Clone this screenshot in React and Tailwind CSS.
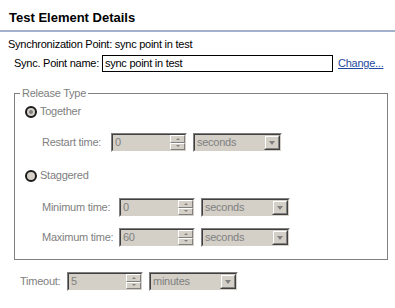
import React from "react";

const sunkenOuter = "border border-t-[#808080] border-l-[#808080] border-r-white border-b-white";
const sunkenInner = "border border-t-[#404040] border-l-[#404040] border-r-[#d4d0c8] border-b-[#d4d0c8]";
const raised = "border border-t-white border-l-white border-r-[#808080] border-b-[#808080]";

function Spinner({ value }) {
  return (
    <div className={`w-[76px] h-[19px] ${sunkenOuter}`}>
      <div className={`h-full flex bg-[#d4d0c8] ${sunkenInner}`}>
        <div className="flex-1 pl-[2px] leading-[15px] text-[#808080]">{value}</div>
        <div className="w-[15px] flex flex-col">
          <div className={`flex-1 flex items-center justify-center bg-[#d4d0c8] ${raised}`}>
            <div className="w-0 h-0 border-x-[2px] border-x-transparent border-b-[2px] border-b-[#808080]" />
          </div>
          <div className={`flex-1 flex items-center justify-center bg-[#d4d0c8] ${raised}`}>
            <div className="w-0 h-0 border-x-[2px] border-x-transparent border-t-[2px] border-t-[#808080]" />
          </div>
        </div>
      </div>
    </div>
  );
}

function Combo({ value }) {
  return (
    <div className={`ml-[6px] w-[89px] h-[19px] ${sunkenOuter}`}>
      <div className={`h-full flex bg-[#d4d0c8] ${sunkenInner}`}>
        <div className="flex-1 pl-[2px] leading-[15px] text-[#808080]">{value}</div>
        <div className="w-[16px] border border-t-[#d4d0c8] border-l-[#d4d0c8] border-r-[#404040] border-b-[#404040]">
          <div className={`h-full flex items-center justify-center bg-[#d4d0c8] ${raised}`}>
            <div className="w-0 h-0 border-x-[3px] border-x-transparent border-t-[4px] border-t-[#808080]" />
          </div>
        </div>
      </div>
    </div>
  );
}

function Radio({ checked, label }) {
  return (
    <div className="flex items-center h-[13px] pl-[10px]">
      <div className="w-[12px] h-[12px] rounded-full border-2 border-[#1a1a1a] bg-[#d4d0c8] flex items-center justify-center">
        {checked && <div className="w-[4px] h-[4px] rounded-full bg-[#808080]" />}
      </div>
      <span className="ml-[3px] text-[#808080]">{label}</span>
    </div>
  );
}

function Row({ label, labelW, value, unit, className = "" }) {
  return (
    <div className={`flex items-center ${className}`}>
      <div className="text-[#808080]" style={{ width: labelW }}>{label}</div>
      <Spinner value={value} />
      <Combo value={unit} />
    </div>
  );
}

export default function App() {
  return (
    <div className="w-[395px] h-[308px] overflow-hidden bg-white text-black text-[11px] leading-[13px] font-['Liberation_Sans',Arial,sans-serif] tracking-[-0.25px]">
      <div className="pt-[10px] pl-[9px] text-[13px] leading-[16px] font-bold tracking-normal">Test Element Details</div>
      <div className="mt-[4px] h-[2px] bg-[#a2b2cc]" />
      <div className="mt-[6px] pl-[8px]">Synchronization Point: sync point in test</div>

      <div className="mt-[4px] flex items-center pl-[14px] h-[17px]">
        <div className="w-[88px]">Sync. Point name:</div>
        <div className="w-[231px] h-[17px] border border-black px-[2px] leading-[15px]">sync point in test</div>
        <a className="ml-[5px] text-[#1e4ba0] underline">Change...</a>
      </div>

      <fieldset className="mt-[15px] ml-[14px] w-[374px] border border-[#808080] pb-[12px]">
        <legend className="ml-[5px] px-[2px] text-[#808080]">Release Type</legend>
        <div className="mt-[5px]">
          <Radio checked label="Together" />
        </div>
        <Row className="mt-[15px] pl-[27px]" label="Restart time:" labelW={69} value="0" unit="seconds" />
        <div className="mt-[17px]">
          <Radio label="Staggered" />
        </div>
        <Row className="mt-[16px] pl-[27px]" label="Minimum time:" labelW={77} value="0" unit="seconds" />
        <Row className="mt-[11px] pl-[27px]" label="Maximum time:" labelW={77} value="60" unit="seconds" />
      </fieldset>

      <Row className="mt-[12px] pl-[20px]" label="Timeout:" labelW={47} value="5" unit="minutes" />
    </div>
  );
}
